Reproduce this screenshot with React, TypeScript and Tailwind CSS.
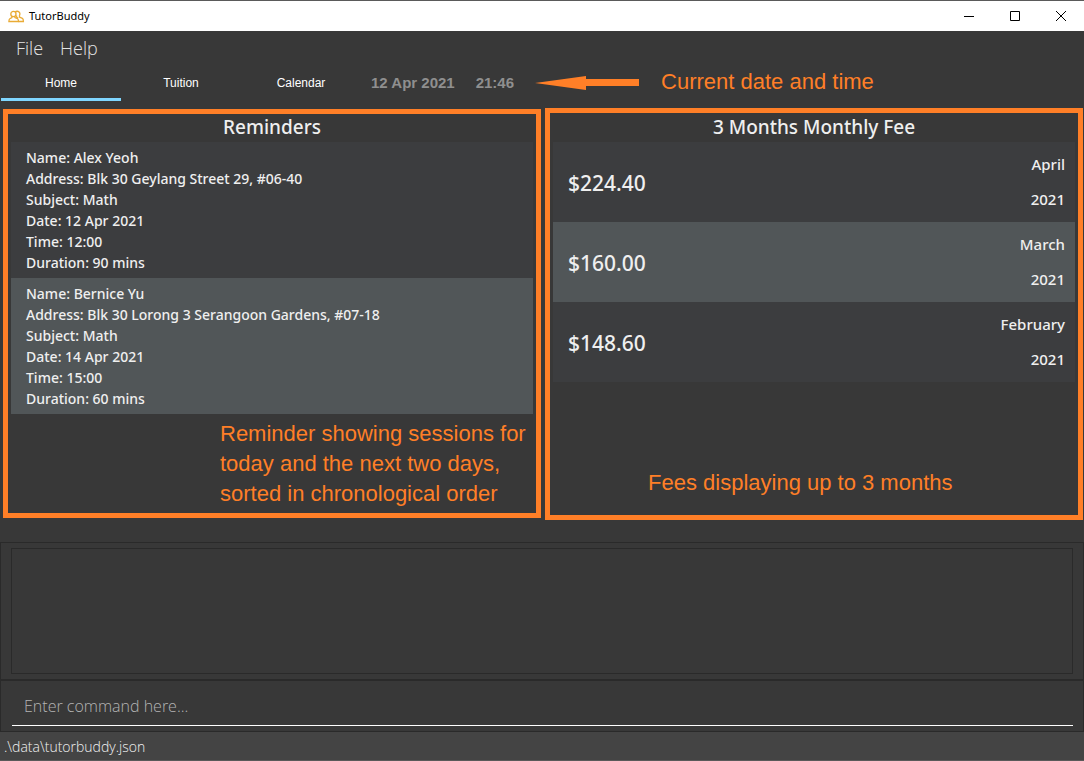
import React from "react";

type Reminder = {
  name: string;
  address: string;
  subject: string;
  date: string;
  time: string;
  duration: string;
};

const reminders: Reminder[] = [
  {
    name: "Alex Yeoh",
    address: "Blk 30 Geylang Street 29, #06-40",
    subject: "Math",
    date: "12 Apr 2021",
    time: "12:00",
    duration: "90 mins",
  },
  {
    name: "Bernice Yu",
    address: "Blk 30 Lorong 3 Serangoon Gardens, #07-18",
    subject: "Math",
    date: "14 Apr 2021",
    time: "15:00",
    duration: "60 mins",
  },
];

const fees = [
  { amount: "$224.40", month: "April", year: "2021" },
  { amount: "$160.00", month: "March", year: "2021" },
  { amount: "$148.60", month: "February", year: "2021" },
];

const tabs = ["Home", "Tuition", "Calendar"];

function TitleBar() {
  return (
    <header className="flex h-[31px] items-center justify-between border-t border-[#5a5a5a] bg-white text-black">
      <div className="flex items-center gap-1 pl-2">
        <svg width="17" height="14" viewBox="0 0 17 14" fill="none" stroke="#e9ab35" strokeWidth="1.3" aria-hidden="true">
          <circle cx="5.4" cy="5" r="2.6" />
          <path d="M7.200 3.100a2.700 2.700 0 1 1 4 3.700" />
          <path d="M3.900 7.200v1.300L1.800 9.700c-.7.400-.9 1-.9 2.800h9.600c0-1.800-.2-2.400-.9-2.800L6.900 8.500V7.200" />
          <path d="M8.600 6.500v1.700l1.600.9M11.500 6.500v1.600l2.900 1.300c.8.400 1 1.100 1 3.100h-4.900" />
        </svg>
        <h1 className="font-['Noto_Sans',sans-serif] text-[11px] leading-4">TutorBuddy</h1>
      </div>
      <div className="flex h-full">
        <button type="button" aria-label="Minimize" className="flex w-[46px] items-center justify-center">
          <svg width="10" height="10" stroke="#000" aria-hidden="true"><path d="M0 5.500h10" /></svg>
        </button>
        <button type="button" aria-label="Maximize" className="flex w-[46px] items-center justify-center">
          <svg width="10" height="10" fill="none" stroke="#000" aria-hidden="true"><path d="M.5.5h9v9h-9z" /></svg>
        </button>
        <button type="button" aria-label="Close" className="flex w-[46px] items-center justify-center">
          <svg width="10" height="10" stroke="#000" aria-hidden="true"><path d="M0 0l10 10M10 0L0 10" /></svg>
        </button>
      </div>
    </header>
  );
}

function Note({ children }: { children: React.ReactNode }) {
  return (
    <p className="font-['Liberation_Sans',sans-serif] text-[22px] leading-[30px] text-[#ff7f27]">
      {children}
    </p>
  );
}

export default function App() {
  return (
    <div className="flex min-h-screen flex-col bg-[#383838] font-['Open_Sans','Noto_Sans',sans-serif] text-[#efefef]">
      <TitleBar />

      <nav className="flex h-[34px] items-center gap-[17px] pl-4 text-[18px] font-light leading-6 text-[#e4e4e4]">
        <button type="button">File</button>
        <button type="button">Help</button>
      </nav>

      <div className="flex h-9 pl-px font-['Liberation_Sans',sans-serif]">
        {tabs.map((tab, i) => (
          <button
            key={tab}
            type="button"
            className={
              i === 0
                ? "w-[120px] border-b-3 border-[#7fd6ff] pt-[2px] text-[12px] text-white"
                : "w-[120px] border-b-3 border-transparent pt-[2px] text-[12px] text-white"
            }
          >
            {tab}
          </button>
        ))}
        <div className="flex items-center gap-[21px] pl-[10px] text-[15px] font-bold text-[#8f8f8f]">
          <time>12 Apr 2021</time>
          <time>21:46</time>
          <svg width="104" height="14" viewBox="0 0 104 14" fill="#ff7f27" aria-hidden="true">
            <path d="M0 7L51 0v3h53v7H51v4z" />
          </svg>
        </div>
        <div className="flex items-center pb-[2px] pl-[22px]">
          <Note>Current date and time</Note>
        </div>
      </div>

      <main className="grid grid-cols-2 items-start gap-1 pb-[22px] pl-[3px] pr-px pt-[7px] font-['Noto_Sans',sans-serif]">
        <section className="mt-px h-[409px] border-5 border-[#ff7f27] px-[3px]">
          <h2 className="h-7 text-center text-[19px] font-medium leading-[26px]">Reminders</h2>
          <ul>
            {reminders.map((r) => (
              <li
                key={r.name}
                className="bg-[#3c3d3f] px-[15px] py-[5px] text-[14px] font-medium leading-[21px] even:bg-[#515658]"
              >
                <p>Name: {r.name}</p>
                <p>Address: {r.address}</p>
                <p>Subject: {r.subject}</p>
                <p>Date: {r.date}</p>
                <p>Time: {r.time}</p>
                <p>Duration: {r.duration}</p>
              </li>
            ))}
          </ul>
          <div className="ml-auto w-[313px] whitespace-nowrap pt-[5px]">
            <Note>
              Reminder showing sessions for
              <br />
              today and the next two days,
              <br />
              sorted in chronological order
            </Note>
          </div>
        </section>

        <section className="h-[412px] border-5 border-[#ff7f27] px-[3px]">
          <h2 className="h-[29px] text-center text-[19px] font-medium leading-[28px]">3 Months Monthly Fee</h2>
          <ul>
            {fees.map((fee) => (
              <li
                key={fee.month}
                className="flex h-20 items-center justify-between bg-[#3c3d3f] pl-[15px] pr-[10px] even:bg-[#515658]"
              >
                <span className="pt-1 text-[21px] font-medium">{fee.amount}</span>
                <div className="text-right text-[15px] font-medium leading-[35px]">
                  <p>{fee.month}</p>
                  <p>{fee.year}</p>
                </div>
              </li>
            ))}
          </ul>
          <div className="pl-[95px] pt-[86px]">
            <Note>Fees displaying up to 3 months</Note>
          </div>
        </section>
      </main>

      <section aria-label="Result" className="flex flex-1 flex-col border border-[#2a2a2a] px-[10px] py-[5px]">
        <output className="block min-h-[126px] flex-1 border border-[#2a2a2a]" />
      </section>

      <section className="h-[52px] border border-[#2a2a2a] pb-[5px] pl-[11px] pr-[10px]">
        <input
          type="text"
          aria-label="Command"
          placeholder="Enter command here..."
          className="h-[45px] w-full border-b border-white bg-transparent pl-3 pt-[6px] text-[16px] font-light text-white outline-none placeholder:text-[#b4b4b4]"
        />
      </section>

      <footer className="flex h-[29px] items-center border-b border-[#5a5a5a] bg-[#444444] pl-1 pt-[2px] text-[14px] font-light leading-5 text-[#f2f2f2]">
        .\data\tutorbuddy.json
      </footer>
    </div>
  );
}
